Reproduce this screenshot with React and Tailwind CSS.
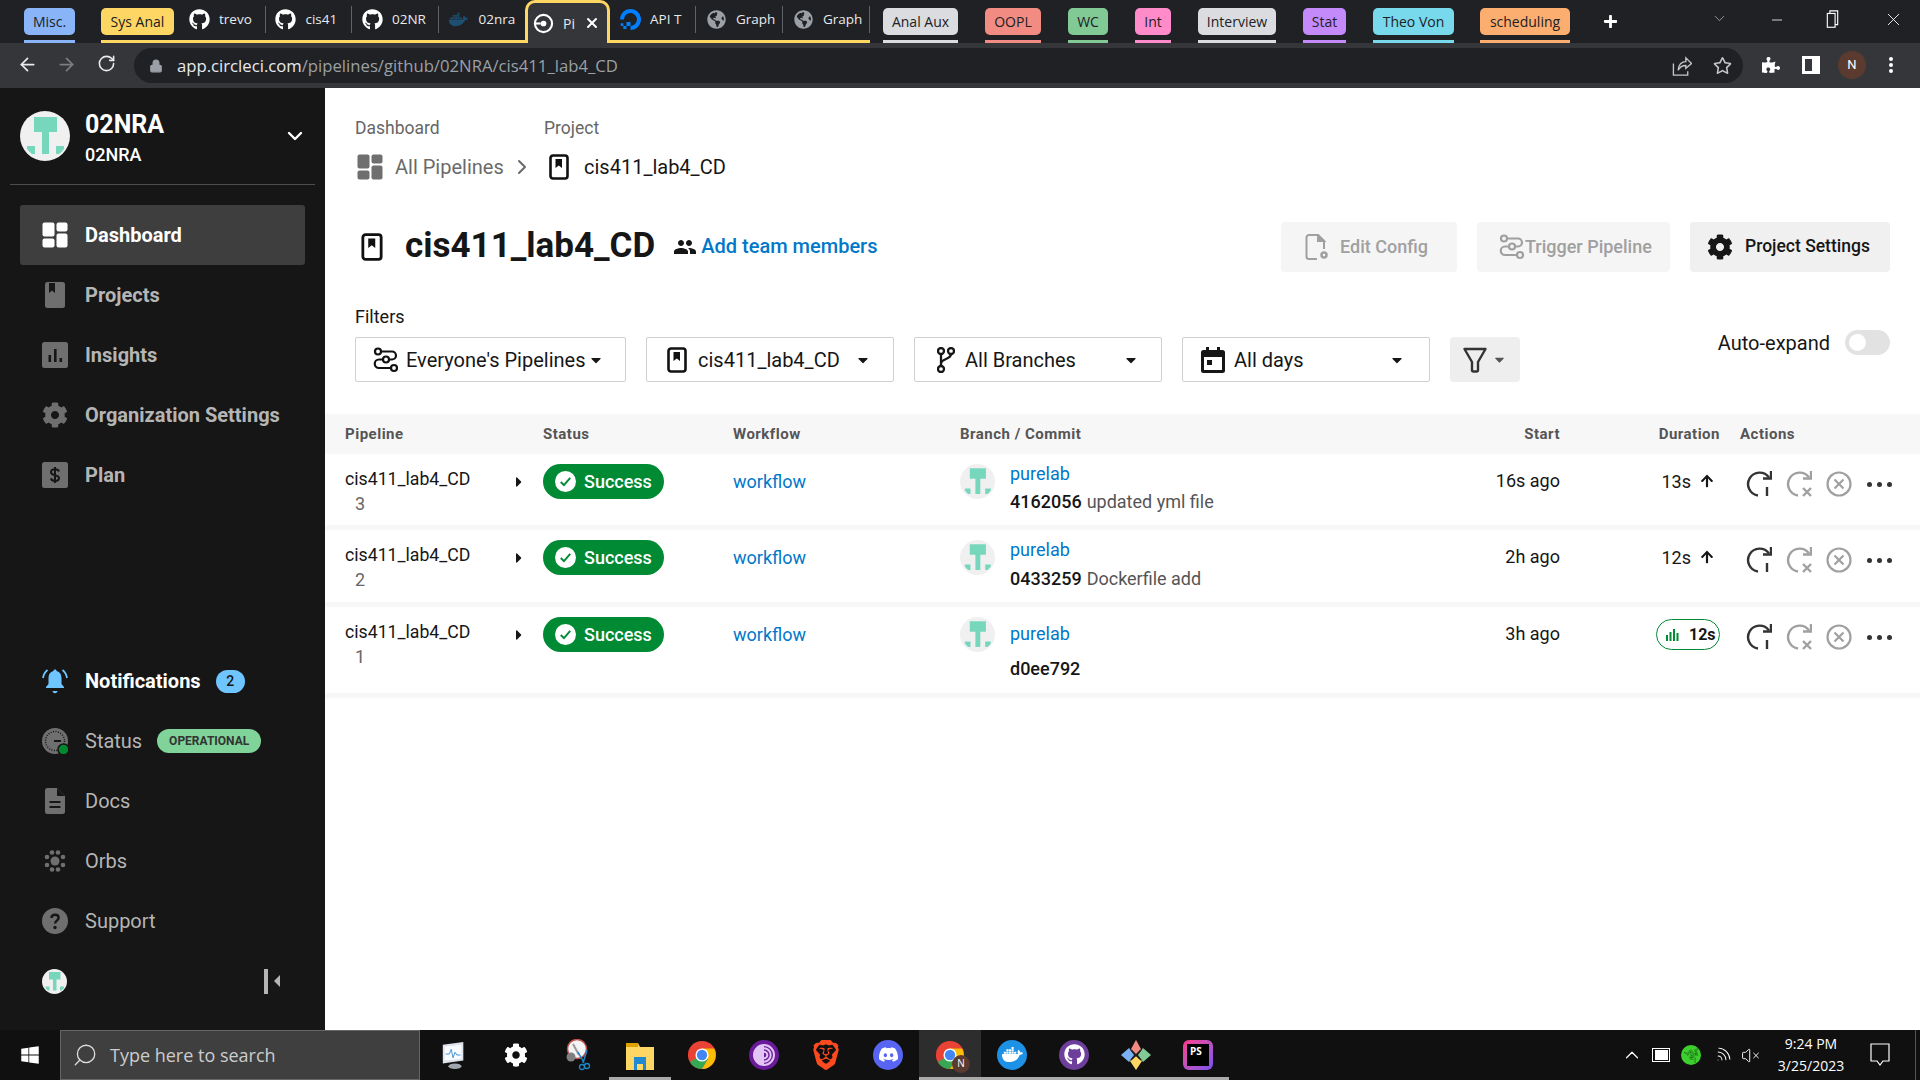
import { FaGithub, FaCog, FaGlobeAmericas, FaWindows, FaArrowUp, FaCaretDown, FaCaretRight, FaPlus, FaDocker, FaRegStar, FaPuzzlePiece } from 'react-icons/fa';
import { MdPeople } from 'react-icons/md';
import { SiDigitalocean, SiBrave, SiDiscord, SiTorbrowser, SiDocker, SiRazer } from 'react-icons/si';
import { ArrowLeft, ArrowRight, RotateCw, Lock, ChevronDown, ChevronRight, ChevronUp, Search, Minus, X, Wifi, VolumeX } from 'lucide-react';

const roboto = { fontFamily: 'Roboto, sans-serif' };

function TAvatar({ className }) {
    return (
        <svg viewBox="0 0 50 50" className={className}>
            <circle cx="25" cy="25" r="25" fill="#f0f0f0" />
            <path d="M14 6h23v15h-8v22h-7V21h-8z" fill="#76d7bd" />
            <path d="M7 35h8v8H12a22 22 0 0 1-5-5zM36 35h8v3a22 22 0 0 1-5 5h-3z" fill="#76d7bd" />
        </svg>
    );
}

function BookIcon({ className, color = '#111' }) {
    return (
        <svg viewBox="0 0 20 26" className={className} fill="none">
            <rect x="1.5" y="1.5" width="17" height="23" rx="2.5" stroke={color} strokeWidth="2.6" />
            <path d="M6.5 5h6.5v9l-3.2-2.6L6.5 14z" fill={color} />
        </svg>
    );
}

function PipelineIcon({ className, color = '#111' }) {
    return (
        <svg viewBox="0 0 26 26" className={className} fill="none" stroke={color} strokeWidth="2.2">
            <circle cx="5" cy="4.5" r="3" />
            <path d="M8 4.5h11a4 4 0 0 1 0 8h-3" />
            <circle cx="13" cy="12.5" r="3" />
            <path d="M10 12.5H6a4.2 4.2 0 0 0 0 8.5h12" />
            <circle cx="21" cy="21" r="3" />
        </svg>
    );
}

function ChromeIcon({ className }) {
    return (
        <svg viewBox="0 0 32 32" className={className}>
            <circle cx="16" cy="16" r="15" fill="#ea4335" />
            <path d="M16 16 3 23.5A15 15 0 0 0 16 31l6-10z" fill="#34a853" />
            <path d="M16 9h13a15 15 0 0 1-13 22l6.5-11z" fill="#fbbc05" />
            <circle cx="16" cy="16" r="7" fill="#fff" />
            <circle cx="16" cy="16" r="5.5" fill="#4285f4" />
        </svg>
    );
}

function Chip({ label, bg, className }) {
    return (
        <div className={`flex h-[43px] shrink-0 flex-col justify-between border-b-[3px] ${className}`}>
            <div className={`mt-[8px] flex h-[27px] items-center justify-center rounded-[5px] text-[14px] text-[#202124] ${bg}`} style={{ fontFamily: '"Open Sans", sans-serif' }}>
                {label}
            </div>
        </div>
    );
}

function Tab({ icon, label, sep = true, width = 'w-[86.5px]' }) {
    return (
        <div className={`flex h-[43px] shrink-0 items-center border-b-[3px] border-[#fdd663] pb-[2px] ${width}`}>
            <div className="flex w-[40px] shrink-0 justify-center">{icon}</div>
            <div className="whitespace-nowrap text-[13.5px] text-[#e8eaed]" style={{ fontFamily: '"Open Sans", sans-serif' }}>{label}</div>
            {sep && <div className="ml-auto h-[27px] w-px bg-[#5f6368]" />}
        </div>
    );
}

function TabStrip() {
    return (
        <div className="flex h-[43px] shrink-0 items-start bg-[#202124]">
            <Chip label="Misc." bg="bg-[#8ab4f8]" className="ml-[24px] w-[51px] border-[#8ab4f8]" />
            <Chip label="Sys Anal" bg="bg-[#fdd663]" className="ml-[26px] w-[73px] border-[#fdd663]" />
            <div className="h-[43px] w-[5px] border-b-[3px] border-[#fdd663]" />
            <Tab icon={<FaGithub className="text-[21px] text-white" />} label="trevo" />
            <Tab icon={<FaGithub className="text-[21px] text-white" />} label="cis41" />
            <Tab icon={<FaGithub className="text-[21px] text-white" />} label="02NR" />
            <Tab icon={<FaDocker className="text-[19px] text-[#1d4f70]" />} label="02nra" sep={false} />
            <div className="flex h-[43px] w-[85px] shrink-0 items-center rounded-t-[10px] border-x-[3px] border-t-[3px] border-[#fdd663] bg-[#35363a]">
                <svg viewBox="0 0 22 22" className="ml-[5px] h-[21px] w-[21px]" fill="none">
                    <circle cx="11" cy="11" r="9" stroke="#fff" strokeWidth="2.2" />
                    <circle cx="11" cy="11" r="3" fill="#fff" />
                    <path d="M1 11h7" stroke="#fff" strokeWidth="2.2" />
                </svg>
                <span className="ml-[9px] text-[14px] text-[#e8eaed]" style={{ fontFamily: '"Open Sans", sans-serif' }}>Pi</span>
                <X className="ml-[9px] h-[16px] w-[16px] text-white" strokeWidth={3} />
            </div>
            <Tab icon={<SiDigitalocean className="text-[21px] text-[#0080ff]" />} label="API T" width="w-[86px]" />
            <Tab icon={<FaGlobeAmericas className="text-[19px] text-[#9aa0a6]" />} label="Graph" width="w-[87px]" />
            <Tab icon={<FaGlobeAmericas className="text-[19px] text-[#9aa0a6]" />} label="Graph" width="w-[87px]" />
            <Chip label="Anal Aux" bg="bg-[#dadce0]" className="ml-[13px] w-[75px] border-[#dadce0]" />
            <Chip label="OOPL" bg="bg-[#f28b82]" className="ml-[27px] w-[56px] border-[#f28b82]" />
            <Chip label="WC" bg="bg-[#81c995]" className="ml-[27px] w-[40px] border-[#81c995]" />
            <Chip label="Int" bg="bg-[#ff8bcb]" className="ml-[27px] w-[36px] border-[#ff8bcb]" />
            <Chip label="Interview" bg="bg-[#dadce0]" className="ml-[27px] w-[78px] border-[#dadce0]" />
            <Chip label="Stat" bg="bg-[#c58af9]" className="ml-[27px] w-[43px] border-[#c58af9]" />
            <Chip label="Theo Von" bg="bg-[#78d9ec]" className="ml-[27px] w-[81px] border-[#78d9ec]" />
            <Chip label="scheduling" bg="bg-[#fcad70]" className="ml-[26px] w-[90px] border-[#fcad70]" />
            <FaPlus className="ml-[33px] mt-[14px] text-[15px] text-white" />
            <ChevronDown className="ml-[93px] mt-[10px] h-[17px] w-[17px] text-[#c4c7c5]" strokeWidth={1} />
            <Minus className="ml-[41px] mt-[12px] h-[16px] w-[16px] text-white" strokeWidth={1.2} />
            <svg viewBox="0 0 14 22" className="ml-[41px] mt-[10px] h-[19px] w-[13px]" fill="none" stroke="#fff" strokeWidth="1.3">
                <rect x="1" y="4" width="9" height="16" />
                <path d="M4 4V1h9v16h-3" />
            </svg>
            <X className="ml-[44px] mt-[9px] h-[21px] w-[21px] text-white" strokeWidth={1} />
        </div>
    );
}

function Toolbar() {
    return (
        <div className="flex h-[45px] shrink-0 items-start bg-[#35363a]">
            <ArrowLeft className="ml-[17px] mt-[11px] h-[21px] w-[21px] text-[#e8eaed]" strokeWidth={2} />
            <ArrowRight className="ml-[18px] mt-[11px] h-[21px] w-[21px] text-[#7b7d80]" strokeWidth={2} />
            <RotateCw className="ml-[20px] mt-[11px] h-[19px] w-[19px] text-[#e8eaed]" strokeWidth={2} />
            <div className="ml-[18px] mt-[5px] flex h-[35px] w-[1609px] items-center rounded-full bg-[#202124]">
                <Lock className="ml-[15px] h-[14px] w-[14px] fill-[#9aa0a6] text-[#9aa0a6]" />
                <div className="ml-[14px] whitespace-nowrap text-[16.7px] text-[#9aa0a6]" style={{ fontFamily: '"Open Sans", sans-serif' }}>
                    <span className="text-[#e8eaed]">app.circleci.com</span>/pipelines/github/02NRA/cis411_lab4_CD
                </div>
                <svg viewBox="0 0 20 22" className="ml-auto h-[21px] w-[20px]" fill="none" stroke="#c4c7c5" strokeWidth="1.4">
                    <path d="M1 9v12h15v-4" />
                    <path d="M6 16c0-6 4-9 8-9V3l6 6-6 5v-3c-3 0-6 1-8 5z" />
                </svg>
                <FaRegStar className="ml-[21px] mr-[11px] text-[19px] text-[#c4c7c5]" />
            </div>
            <FaPuzzlePiece className="ml-[19px] mt-[13px] text-[18px] text-white" />
            <svg viewBox="0 0 18 18" className="ml-[22px] mt-[13px] h-[18px] w-[18px]">
                <path d="M0 0h18v18H0z" fill="#fff" />
                <path d="M3 3h7v12H3z" fill="#35363a" />
            </svg>
            <div className="ml-[18px] mt-[8px] flex h-[28px] w-[28px] items-center justify-center rounded-full bg-[#5b3b30] text-[13px] text-white" style={roboto}>N</div>
            <div className="ml-[23px] mt-[14px] flex h-[16px] flex-col justify-between">
                <div className="h-[4px] w-[4px] rounded-full bg-white" />
                <div className="h-[4px] w-[4px] rounded-full bg-white" />
                <div className="h-[4px] w-[4px] rounded-full bg-white" />
            </div>
        </div>
    );
}

function NavItem({ icon, label, active, bold, strong, children }) {
    return (
        <div className={`mx-[20px] flex h-[60px] items-center rounded-[3px] pl-[22px] ${active ? 'bg-[#3e3e3e]' : ''}`}>
            <div className="flex w-[26px] shrink-0 justify-center">{icon}</div>
            <span className={`ml-[17px] whitespace-nowrap text-[20px] ${strong ? 'font-bold text-white' : bold ? 'font-bold text-[#b5b5b5]' : 'text-[#b5b5b5]'}`}>{label}</span>
            {children}
        </div>
    );
}

function Sidebar() {
    const c = '#6f6f6f';
    return (
        <aside className="flex w-[325px] shrink-0 flex-col bg-[#161616]" style={roboto}>
            <div className="flex h-[96px] items-center pl-[20px] pr-[20px]">
                <TAvatar className="h-[50px] w-[50px]" />
                <div className="ml-[15px] mt-[4px]">
                    <div className="text-[25px] font-bold leading-[30px] text-white">02NRA</div>
                    <div className="mt-[4px] text-[18px] font-medium leading-[22px] text-white">02NRA</div>
                </div>
                <ChevronDown className="ml-auto h-[24px] w-[24px] translate-x-[2px] text-white" strokeWidth={2.4} />
            </div>
            <div className="mx-[10px] h-px bg-[#4d4d4d]" />
            <div className="mt-[20px]">
                <NavItem active strong label="Dashboard" icon={
                    <svg viewBox="0 0 26 26" className="h-[26px] w-[26px]" fill="#fff">
                        <rect x="0.5" y="0.5" width="12" height="14" rx="2" />
                        <rect x="14.5" y="0.5" width="11" height="9" rx="2" />
                        <rect x="0.5" y="16.5" width="12" height="9" rx="2" />
                        <rect x="14.5" y="11.5" width="11" height="14" rx="2" />
                    </svg>
                } />
                <NavItem bold label="Projects" icon={
                    <svg viewBox="0 0 20 26" className="h-[26px] w-[20px]">
                        <rect width="20" height="26" rx="2.5" fill={c} />
                        <path d="M4 1h6v10l-3-2.5L4 11z" fill="#161616" />
                    </svg>
                } />
                <NavItem bold label="Insights" icon={
                    <svg viewBox="0 0 26 26" className="h-[26px] w-[26px]">
                        <rect width="26" height="26" rx="2.5" fill={c} />
                        <path d="M6.5 13h2.6v7H6.5zM12 7h2.6v13H12zM17.5 16h2.6v4h-2.6z" fill="#161616" />
                    </svg>
                } />
                <NavItem bold label="Organization Settings" icon={<FaCog className="text-[26px] text-[#6f6f6f]" />} />
                <NavItem bold label="Plan" icon={
                    <svg viewBox="0 0 26 26" className="h-[26px] w-[26px]">
                        <rect width="26" height="26" rx="2.5" fill={c} />
                        <path d="M17 9.5c-.5-1.5-2-2.2-4-2.2-2.3 0-4 1-4 2.9 0 4 8 2 8 5.800 0 2-1.700 2.900-4 2.900s-3.600-1-4.100-2.500M13 5v16" stroke="#161616" strokeWidth="2" fill="none" />
                    </svg>
                } />
            </div>
            <div className="mt-auto pb-[19px]">
                <NavItem strong label="Notifications" icon={
                    <svg viewBox="0 0 26 26" className="h-[26px] w-[26px]" fill="#6fc5ff">
                        <path d="M13 1.5c1 0 1.600.7 1.600 1.500 3.400 1 4.900 3.600 4.900 7v6l2.500 3v1H4v-1l2.500-3v-6c0-3.400 1.500-6 4.900-7 0-.8.600-1.500 1.600-1.500zM10.500 23h5c0 1.200-1.100 2.200-2.500 2.200S10.500 24.200 10.500 23z" />
                        <path d="M5.500 2C3 4 1.500 6.500 1 10M20.500 2c2.500 2 4 4.500 4.500 8" fill="none" stroke="#6fc5ff" strokeWidth="1.800" />
                    </svg>
                }>
                    <span className="ml-[15px] flex h-[23px] w-[29px] items-center justify-center rounded-full bg-[#6fc5ff] text-[14px] font-medium text-[#161616]">2</span>
                </NavItem>
                <NavItem label="Status" icon={
                    <svg viewBox="0 0 26 26" className="h-[26px] w-[26px]">
                        <circle cx="13" cy="13" r="13" fill={c} />
                        <circle cx="13" cy="13" r="9.5" fill="none" stroke="#161616" strokeWidth="1.5" strokeDasharray="1 1.5" />
                        <path d="M12 13h7" stroke="#161616" strokeWidth="2" />
                        <circle cx="21.5" cy="21.5" r="5.5" fill="#00892f" stroke="#161616" strokeWidth="1.5" />
                    </svg>
                }>
                    <span className="ml-[15px] flex h-[24px] w-[104px] items-center justify-center rounded-full bg-[#80d499] text-[12px] font-bold text-[#333]">OPERATIONAL</span>
                </NavItem>
                <NavItem label="Docs" icon={
                    <svg viewBox="0 0 20 26" className="h-[26px] w-[20px]">
                        <path d="M2.5 0H12l8 8v15.5a2.5 2.5 0 0 1-2.500 2.500h-15A2.500 2.500 0 0 1 0 23.500v-21A2.500 2.500 0 0 1 2.500 0z" fill={c} />
                        <path d="M12 0v8h8zM4.500 13h11v2h-11zM4.500 18h11v2h-11z" fill="#161616" />
                    </svg>
                } />
                <NavItem label="Orbs" icon={
                    <svg viewBox="0 0 22 22" className="h-[22px] w-[22px]" fill={c}>
                        <circle cx="11" cy="11" r="4.5" />
                        <circle cx="8" cy="2.5" r="2.3" /><circle cx="14" cy="2.5" r="2.3" />
                        <circle cx="8" cy="19.5" r="2.3" /><circle cx="14" cy="19.5" r="2.3" />
                        <circle cx="3" cy="7" r="2.3" /><circle cx="19" cy="7" r="2.3" />
                        <circle cx="3" cy="15" r="2.3" /><circle cx="19" cy="15" r="2.3" />
                    </svg>
                } />
                <NavItem label="Support" icon={
                    <svg viewBox="0 0 26 26" className="h-[26px] w-[26px]">
                        <circle cx="13" cy="13" r="13" fill={c} />
                        <path d="M9.5 10c0-2 1.500-3.300 3.600-3.300s3.500 1.300 3.500 3c0 3-3.500 2.800-3.500 5.800" fill="none" stroke="#161616" strokeWidth="2.4" />
                        <circle cx="13" cy="19.5" r="1.7" fill="#161616" />
                    </svg>
                } />
                <div className="mx-[20px] flex h-[60px] items-center pl-[22px]">
                    <TAvatar className="h-[25px] w-[25px]" />
                    <div className="ml-auto mr-[25px] flex items-center gap-[6px]">
                        <div className="h-[25px] w-[4px] bg-[#b5b5b5]" />
                        <div className="h-0 w-0 border-y-[6px] border-r-[6px] border-y-transparent border-r-[#b5b5b5]" />
                    </div>
                </div>
            </div>
        </aside>
    );
}

function Header() {
    return (
        <div className="px-[30px]">
            <div className="grid grid-cols-[189px_1fr] pt-[28px]">
                <div className="text-[17.5px] leading-[24px] text-[#666]">Dashboard</div>
                <div className="text-[17.5px] leading-[24px] text-[#666]">Project</div>
                <div className="mt-[14px] flex h-[26px] items-center">
                    <svg viewBox="0 0 26 26" className="ml-[2px] h-[26px] w-[26px]" fill="#6f6f6f">
                        <rect x="0.5" y="0.5" width="12" height="14" rx="2" />
                        <rect x="14.5" y="0.5" width="11" height="9" rx="2" />
                        <rect x="0.5" y="16.5" width="12" height="9" rx="2" />
                        <rect x="14.5" y="11.5" width="11" height="14" rx="2" />
                    </svg>
                    <span className="ml-[12px] text-[20px] text-[#6a6a6a]">All Pipelines</span>
                    <ChevronRight className="ml-[6px] h-[24px] w-[24px] text-[#6a6a6a]" strokeWidth={2} />
                </div>
                <div className="mt-[14px] flex h-[26px] items-center">
                    <BookIcon className="ml-[5px] h-[26px] w-[20px]" />
                    <span className="ml-[15px] text-[20px] text-[#161616]">cis411_lab4_CD</span>
                </div>
            </div>

            <div className="mt-[42px] flex h-[50px] items-center">
                <BookIcon className="ml-[5px] h-[28px] w-[24px]" />
                <h1 className="-mt-[2px] ml-[21px] text-[35px] font-bold text-[#161616]">cis411_lab4_CD</h1>
                <MdPeople className="ml-[18px] text-[24px] text-[#161616]" />
                <span className="-mt-[2px] ml-[4px] text-[20px] font-medium text-[#0078ca]">Add team members</span>
                <div className="ml-auto flex h-[50px] w-[176px] items-center rounded-[4px] bg-[#f5f5f5] pl-[24px]">
                    <svg viewBox="0 0 24 26" className="h-[26px] w-[24px]" fill="none" stroke="#a0a0a0" strokeWidth="2">
                        <path d="M12 25H4a2.500 2.500 0 0 1-2.500-2.500v-19A2.500 2.500 0 0 1 4 1h9l6 6v8" />
                        <path d="M13 1v6h6z" fill="#a0a0a0" />
                        <circle cx="19" cy="21" r="2.5" strokeWidth="2.5" />
                    </svg>
                    <span className="-mt-[2px] ml-[11px] text-[18px] font-medium text-[#a0a0a0]">Edit Config</span>
                </div>
                <div className="ml-[20px] flex h-[50px] w-[193px] items-center rounded-[4px] bg-[#f5f5f5] pl-[22px]">
                    <PipelineIcon className="h-[26px] w-[26px]" color="#a0a0a0" />
                    <span className="-mt-[2px] text-[18px] font-medium text-[#a0a0a0]">Trigger Pipeline</span>
                </div>
                <div className="ml-[20px] flex h-[50px] w-[200px] items-center rounded-[4px] bg-[#f0f0f0] pl-[17px]">
                    <FaCog className="text-[26px] text-[#161616]" />
                    <span className="-mt-[2px] ml-[12px] text-[17.5px] font-medium text-[#161616]">Project Settings</span>
                </div>
            </div>

            <div className="mt-[33px] text-[18px] leading-[24px] text-[#161616]">Filters</div>
            <div className="mt-[8px] flex h-[45px] items-start">
                <div className="flex h-[45px] w-[271px] items-center rounded-[2px] border border-[#d0d0d0] pl-[17px]">
                    <PipelineIcon className="h-[26px] w-[26px]" />
                    <span className="ml-[7px] whitespace-nowrap text-[20px] text-[#161616]">Everyone's Pipelines</span>
                    <FaCaretDown className="ml-[3px] text-[16px] text-[#161616]" />
                </div>
                <div className="ml-[20px] flex h-[45px] w-[248px] items-center rounded-[2px] border border-[#d0d0d0] pl-[20px]">
                    <BookIcon className="h-[26px] w-[20px]" />
                    <span className="ml-[11px] text-[20px] text-[#161616]">cis411_lab4_CD</span>
                    <FaCaretDown className="ml-auto mr-[22px] text-[16px] text-[#161616]" />
                </div>
                <div className="ml-[20px] flex h-[45px] w-[248px] items-center rounded-[2px] border border-[#d0d0d0] pl-[22px]">
                    <svg viewBox="0 0 18 26" className="h-[26px] w-[18px]" fill="none" stroke="#161616" strokeWidth="2.3">
                        <circle cx="4" cy="4" r="3" /><circle cx="14" cy="4" r="3" /><circle cx="4" cy="22" r="3" />
                        <path d="M4 7v12M14 7c0 6-10 4-10 10" />
                    </svg>
                    <span className="ml-[10px] text-[20px] text-[#161616]">All Branches</span>
                    <FaCaretDown className="ml-auto mr-[22px] text-[16px] text-[#161616]" />
                </div>
                <div className="ml-[20px] flex h-[45px] w-[248px] items-center rounded-[2px] border border-[#d0d0d0] pl-[18px]">
                    <svg viewBox="0 0 24 26" className="h-[26px] w-[24px]" fill="#161616">
                        <path d="M5 0h3v3h8V0h3v3h2.500A2.500 2.500 0 0 1 24 5.500v18a2.500 2.500 0 0 1-2.500 2.500h-19A2.500 2.500 0 0 1 0 23.500v-18A2.500 2.500 0 0 1 2.500 3H5zM3 10v13h18V10z" />
                        <rect x="6" y="13" width="5" height="5" />
                    </svg>
                    <span className="ml-[9px] text-[20px] text-[#161616]">All days</span>
                    <FaCaretDown className="ml-auto mr-[24px] text-[16px] text-[#161616]" />
                </div>
                <div className="ml-[20px] flex h-[45px] w-[70px] items-center rounded-[4px] bg-[#eeeeee] pl-[13px]">
                    <svg viewBox="0 0 24 26" className="h-[26px] w-[24px]" fill="none" stroke="#333" strokeWidth="2.4" strokeLinejoin="round">
                        <path d="M1.5 2h21L15 15v8a1.500 1.500 0 0 1-1.500 1.500h-3A1.500 1.500 0 0 1 9 23v-8z" />
                    </svg>
                    <FaCaretDown className="ml-[5px] text-[15px] text-[#555]" />
                </div>
                <span className="-mt-[6px] ml-auto text-[20px] leading-[24px] text-[#161616]">Auto-expand</span>
                <div className="-mt-[7px] ml-[15px] flex h-[25px] w-[45px] items-center rounded-full bg-[#e2e2e2] pl-[4px]">
                    <div className="h-[17px] w-[17px] rounded-full bg-white" />
                </div>
            </div>
        </div>
    );
}

function RerunIcon({ color, mark }) {
    return (
        <svg viewBox="0 0 26 26" className="h-[26px] w-[26px]" fill="none" stroke={color} strokeWidth="2.4">
            <path d="M23 6.500A11.500 11.500 0 1 0 12 24.500" />
            <path d="M25 0v7.500h-8" />
            {mark === 'bar' ? <path d="M21 16v9" /> : <path d="M17 17l8 8M25 17l-8 8" />}
        </svg>
    );
}

function Actions() {
    return (
        <div className="flex items-center">
            <RerunIcon color="#333" mark="bar" />
            <div className="ml-[14px]"><RerunIcon color="#a0a0a0" mark="x" /></div>
            <svg viewBox="0 0 26 26" className="ml-[14px] h-[26px] w-[26px]" fill="none" stroke="#a0a0a0" strokeWidth="2.2">
                <circle cx="13" cy="13" r="11.5" />
                <path d="M8.500 8.500l9 9M17.500 8.500l-9 9" />
            </svg>
            <div className="ml-[15px] flex gap-[5px]">
                <div className="h-[5px] w-[5px] rounded-full bg-[#333]" />
                <div className="h-[5px] w-[5px] rounded-full bg-[#333]" />
                <div className="h-[5px] w-[5px] rounded-full bg-[#333]" />
            </div>
        </div>
    );
}

function Row({ num, hash, msg, start, dur, rowClass, commitGap, labTop, fast }) {
    return (
        <div className={`flex items-start bg-white pl-[20px] ${rowClass}`}>
            <div className="mt-[13px] flex w-[198px] shrink-0">
                <div className="w-[166px]">
                    <div className="text-[17.7px] leading-[24px] text-[#161616]">cis411_lab4_CD</div>
                    <div className="mt-px pl-[10px] text-[18px] leading-[24px] text-[#666]">{num}</div>
                </div>
                <FaCaretRight className="mt-[7px] text-[16px] text-[#161616]" />
            </div>
            <div className="mt-[10px] flex w-[190px] shrink-0">
                <div className="flex h-[35px] w-[121px] items-center rounded-full bg-[#008a33] pl-[12px]">
                    <svg viewBox="0 0 20 20" className="h-[21px] w-[21px]">
                        <circle cx="10" cy="10" r="10" fill="#fff" />
                        <path d="M5.500 10.500l3 3 6-7" fill="none" stroke="#008a33" strokeWidth="1.8" />
                    </svg>
                    <span className="ml-[8px] text-[18px] font-medium text-white">Success</span>
                </div>
            </div>
            <div className="mt-[15px] w-[227px] shrink-0 text-[18px] leading-[26px] text-[#0078ca]">workflow</div>
            <div className="mt-[10px] flex flex-1">
                <TAvatar className="h-[35px] w-[35px]" />
                <div className={`ml-[15px] ${labTop}`}>
                    <div className="text-[18px] leading-[24px] text-[#0078ca]">purelab</div>
                    <div className={`text-[18px] leading-[24px] ${commitGap}`}>
                        <span className="font-medium text-[#161616]">{hash}</span>
                        {msg && <span className="ml-[5px] text-[#555]">{msg}</span>}
                    </div>
                </div>
            </div>
            <div className="mt-[15px] w-[100px] shrink-0 text-right text-[18px] leading-[24px] text-[#161616]">{start}</div>
            <div className="flex w-[160px] shrink-0 justify-end">
                {fast ? (
                    <div className="mt-[12px] flex h-[31px] w-[64px] items-center rounded-full border border-[#008a33] pl-[9px]">
                        <svg viewBox="0 0 13 13" className="h-[13px] w-[13px]" fill="#008a33">
                            <path d="M0 7h2v6H0zM3.500 4h2v9h-2zM7 1h2v12H7zM10.500 5h2v8h-2z" />
                        </svg>
                        <span className="ml-[10px] text-[16px] font-bold text-[#161616]">{dur}</span>
                    </div>
                ) : (
                    <div className="mr-[6px] mt-[15px] flex h-[24px] items-center">
                        <span className="text-[18px] text-[#161616]">{dur}</span>
                        <FaArrowUp className="ml-[9px] text-[14px] text-[#161616]" />
                    </div>
                )}
            </div>
            <div className="ml-[26px] mt-[17px] w-[174px] shrink-0"><Actions /></div>
        </div>
    );
}

function Table() {
    return (
        <div className="mt-[32px]">
            <div className="flex h-[40px] items-center bg-[#f7f7f7] pl-[20px] text-[15px] font-bold tracking-[0.5px] text-[#555]">
                <div className="w-[198px]">Pipeline</div>
                <div className="w-[190px]">Status</div>
                <div className="w-[227px]">Workflow</div>
                <div className="flex-1">Branch / Commit</div>
                <div className="w-[100px] text-right">Start</div>
                <div className="w-[160px] text-right">Duration</div>
                <div className="ml-[20px] w-[180px]">Actions</div>
            </div>
            <Row num="3" hash="4162056" msg="updated yml file" start="16s ago" dur="13s" rowClass="h-[71px]" commitGap="mt-[4px]" labTop="-mt-[2px]" />
            <div className="h-[5px] bg-[#f7f7f7]" />
            <Row num="2" hash="0433259" msg="Dockerfile add" start="2h ago" dur="12s" rowClass="h-[72px]" commitGap="mt-[5px]" labTop="-mt-[2px]" />
            <div className="h-[5px] bg-[#f7f7f7]" />
            <Row num="1" hash="d0ee792" start="3h ago" dur="12s" rowClass="h-[86px]" commitGap="mt-[11px]" labTop="mt-[5px]" fast />
            <div className="h-[5px] bg-[#f7f7f7]" />
        </div>
    );
}

function TaskIcon({ children, open, active }) {
    return (
        <div className={`flex h-[50px] w-[62px] shrink-0 items-center justify-center border-b-[3px] pt-[2px] ${active ? 'border-[#aaa] bg-[#2d2d2d]' : open ? 'border-[#aaa]' : 'border-transparent'}`}>
            {children}
        </div>
    );
}

function Circle({ bg, children }) {
    return <div className={`flex h-[30px] w-[30px] items-center justify-center rounded-full ${bg}`}>{children}</div>;
}

function Taskbar() {
    return (
        <div className="flex h-[50px] shrink-0 items-center bg-[#101010]" style={{ fontFamily: '"Open Sans", sans-serif' }}>
            <div className="flex w-[60px] shrink-0 justify-center"><FaWindows className="text-[20px] text-white" /></div>
            <div className="flex h-[50px] w-[360px] shrink-0 items-center border border-[#666] bg-[#3f3f3f]">
                <Search className="ml-[11px] h-[26px] w-[26px] -scale-x-100 text-[#ddd]" strokeWidth={1.2} />
                <span className="ml-[12px] text-[18px] text-[#ccc]">Type here to search</span>
            </div>
            <div className="ml-[3px] flex">
                <TaskIcon>
                    <svg viewBox="0 0 30 32" className="h-[30px] w-[28px]">
                        <path d="M3 5l22-3v20L3 25z" fill="#dfe4ea" />
                        <path d="M5 7l18-2v15L5 22z" fill="#f8fbff" />
                        <path d="M6 15h4l2-5 2 9 2-6 2 3h4" fill="none" stroke="#3f8fd2" strokeWidth="1" />
                        <ellipse cx="16" cy="28" rx="7" ry="3" fill="#9fa6ad" />
                    </svg>
                </TaskIcon>
                <TaskIcon><FaCog className="text-[24px] text-white" /></TaskIcon>
                <TaskIcon>
                    <svg viewBox="0 0 30 32" className="h-[32px] w-[30px]">
                        <circle cx="14" cy="10" r="9.5" fill="#f4f4f4" stroke="#c0504d" strokeWidth="1.5" />
                        <path d="M10 5l6 11" stroke="#999" strokeWidth="2" />
                        <circle cx="8" cy="18" r="4.5" fill="#7f7f7f" />
                        <path d="M15 13l6 11M24 11l-4 13" stroke="#1d86c9" strokeWidth="1.5" />
                        <circle cx="19" cy="28" r="2.5" fill="none" stroke="#1d86c9" strokeWidth="1.3" />
                        <circle cx="24" cy="27" r="2.5" fill="none" stroke="#1d86c9" strokeWidth="1.3" />
                    </svg>
                </TaskIcon>
                <TaskIcon open>
                    <svg viewBox="0 0 28 30" className="h-[30px] w-[28px]">
                        <path d="M0 3h12l2 4h14v23H0z" fill="#fdd663" />
                        <path d="M0 3h12v4H0z" fill="#e0a100" />
                        <path d="M8 17h12v13h-3v-6h-6v6H8z" fill="#1f8ad2" />
                    </svg>
                </TaskIcon>
                <TaskIcon><ChromeIcon className="h-[30px] w-[30px]" /></TaskIcon>
                <TaskIcon><Circle bg="bg-[#6a1b9a]"><SiTorbrowser className="text-[22px] text-[#e3c5f5]" /></Circle></TaskIcon>
                <TaskIcon><SiBrave className="text-[30px] text-[#fb4a20]" /></TaskIcon>
                <TaskIcon><Circle bg="bg-[#5865f2]"><SiDiscord className="text-[19px] text-white" /></Circle></TaskIcon>
                <TaskIcon active>
                    <div className="relative">
                        <ChromeIcon className="h-[30px] w-[30px]" />
                        <div className="absolute -bottom-[3px] -right-[5px] flex h-[18px] w-[18px] items-center justify-center rounded-full bg-[#5b3b30] text-[10px] text-white">N</div>
                    </div>
                </TaskIcon>
                <TaskIcon open><Circle bg="bg-[#1d91e6]"><SiDocker className="text-[21px] text-white" /></Circle></TaskIcon>
                <TaskIcon open><Circle bg="bg-[#6e3e9c]"><FaGithub className="text-[21px] text-white" /></Circle></TaskIcon>
                <TaskIcon open>
                    <svg viewBox="0 0 30 30" className="h-[30px] w-[30px]">
                        <path d="M15 0l5 9-5 6-5-6z" fill="#f28b82" />
                        <path d="M0 15l8-7 5 7-5 7z" fill="#7cb1f5" />
                        <path d="M30 15l-8-7-5 7 5 7z" fill="#81c995" />
                        <path d="M15 30l-6-9 6-5 6 5z" fill="#fdd663" />
                        <path d="M10 10l10 10M20 10L10 20" stroke="#222" strokeWidth="1.5" />
                    </svg>
                </TaskIcon>
                <TaskIcon open>
                    <div className="relative h-[30px] w-[30px]">
                        <div className="h-[30px] w-[30px] rounded-[6px] bg-gradient-to-br from-[#ff318c] to-[#7b4df0]" />
                        <div className="absolute left-[4px] top-[4px] h-[22px] w-[22px] bg-black pl-[3px] pt-[1px] text-[10px] font-bold leading-[12px] text-white">PS</div>
                    </div>
                </TaskIcon>
            </div>
            <ChevronUp className="ml-auto h-[22px] w-[22px] text-white" strokeWidth={1.3} />
            <div className="ml-[9px] flex h-[14px] w-[18px] items-center justify-center border border-white"><div className="h-[10px] w-[13px] bg-white" /></div>
            <div className="ml-[11px] flex h-[20px] w-[20px] items-center justify-center rounded-full bg-[#3ccf2e]"><SiRazer className="text-[15px] text-[#0a3d0a]" /></div>
            <Wifi className="ml-[12px] h-[19px] w-[19px] rotate-45 text-white" strokeWidth={1.2} />
            <VolumeX className="ml-[9px] h-[19px] w-[19px] text-white" strokeWidth={1.2} />
            <div className="ml-[16px] w-[70px] text-center text-[14px] leading-[22px] text-white">
                <div>9:24 PM</div>
                <div>3/25/2023</div>
            </div>
            <svg viewBox="0 0 20 24" className="ml-[24px] h-[24px] w-[20px]" fill="none" stroke="#fff" strokeWidth="1.2">
                <path d="M1 1h18v17h-6l-3 4-3-4H1z" />
            </svg>
            <div className="ml-[25px] mr-[4px] h-[50px] w-px bg-[#555]" />
        </div>
    );
}

export default function App() {
    return (
        <div className="flex h-[1080px] w-[1920px] flex-col overflow-hidden bg-white">
            <TabStrip />
            <Toolbar />
            <div className="flex min-h-0 flex-1">
                <Sidebar />
                <main className="flex-1" style={roboto}>
                    <Header />
                    <Table />
                </main>
            </div>
            <Taskbar />
        </div>
    );
}
